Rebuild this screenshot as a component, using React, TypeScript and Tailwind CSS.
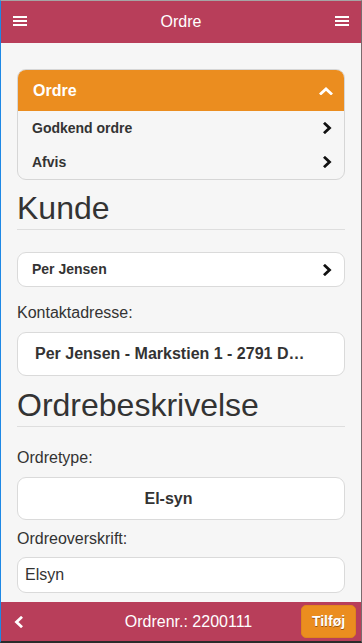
import React from 'react'

const ChevronRight = ({ color = '#111' }: { color?: string }) => (
  <svg width="9" height="12" viewBox="0 0 9 12">
    <polyline points="2,1.8 6.5,6 2,10.2" fill="none" stroke={color} strokeWidth="2.8" strokeLinecap="square" />
  </svg>
)

const ChevronLeft = () => (
  <svg width="9" height="12" viewBox="0 0 9 12">
    <polyline points="7,1.8 2.5,6 7,10.2" fill="none" stroke="#fff" strokeWidth="2.8" strokeLinecap="square" />
  </svg>
)

const ChevronUp = () => (
  <svg width="14" height="8" viewBox="0 0 14 8">
    <polyline points="2,6.5 7,2 12,6.5" fill="none" stroke="#fff" strokeWidth="2.8" strokeLinecap="square" />
  </svg>
)

const Burger = () => (
  <div className="flex flex-col gap-[2px] w-[14px]">
    <span className="block h-[2px] bg-white" />
    <span className="block h-[2px] bg-white" />
    <span className="block h-[2px] bg-white" />
  </div>
)

export default function App() {
  return (
    <div className="w-[362px] h-[643px] flex flex-col overflow-hidden border-t border-t-[#a5a5a5] border-l border-l-[#1e88e5] border-r border-r-[#7a6a6e] border-b-2 border-b-[#2b2b2b] font-['Liberation_Sans',Arial,sans-serif] text-[#333]">
      {/* header */}
      <div className="h-[42px] shrink-0 bg-[#b83e5a] flex items-start justify-between px-[12px] pt-[15px]">
        <Burger />
        <span className="text-white text-[16px] leading-[14px] mt-[-1px]">Ordre</span>
        <Burger />
      </div>

      {/* content */}
      <div className="flex-1 bg-[#f6f6f6] px-4 pt-[26px] overflow-hidden">
        <div className="rounded-[9px] border border-[#d6d6d6] overflow-hidden">
          <div className="h-[41px] bg-[#eb8d1f] flex items-center justify-between pl-[15px] pr-[11px]">
            <span className="text-white font-bold text-[16px]">Ordre</span>
            <ChevronUp />
          </div>
          <div className="h-[34px] flex items-center justify-between pl-[14px] pr-[12px]">
            <span className="font-bold text-[14px]">Godkend ordre</span>
            <ChevronRight />
          </div>
          <div className="h-[34px] flex items-center justify-between pl-[14px] pr-[12px]">
            <span className="font-bold text-[14px]">Afvis</span>
            <ChevronRight />
          </div>
        </div>

        <h2 className="mt-[9px] text-[32px] leading-[38px] pb-[2px] border-b border-[#dedede]">Kunde</h2>

        <div className="mt-[22px] h-[35px] bg-white rounded-[9px] border border-[#dadada] flex items-center justify-between pl-[14px] pr-[12px]">
          <span className="font-bold text-[14px]">Per Jensen</span>
          <ChevronRight />
        </div>

        <div className="mt-[16px] text-[16px] leading-5">Kontaktadresse:</div>
        <div className="mt-[9px] h-[44px] bg-white rounded-[9px] border border-[#dadada] flex items-center pl-[17px] pr-[20px]">
          <span className="font-bold text-[16px] whitespace-nowrap">Per Jensen - Markstien 1 - 2791 D…</span>
        </div>

        <h2 className="mt-[10px] text-[32px] leading-[38px] pb-[2px] border-b border-[#dedede]">Ordrebeskrivelse</h2>

        <div className="mt-[21px] text-[16px] leading-5">Ordretype:</div>
        <div className="mt-[9px] h-[43px] bg-white rounded-[9px] border border-[#dadada] flex items-center justify-center pl-[15px] pr-[40px]">
          <span className="font-bold text-[16px]">El-syn</span>
        </div>

        <div className="mt-[9px] text-[16px] leading-5">Ordreoverskrift:</div>
        <div className="mt-[8px] h-[36px] bg-white rounded-[9px] border border-[#dadada] flex items-center pl-[7px]">
          <span className="text-[16px]">Elsyn</span>
        </div>
      </div>

      {/* footer */}
      <div className="h-[39px] shrink-0 bg-[#b83e5a] flex items-center">
        <div className="w-[75px] pl-[13px] flex items-center">
          <ChevronLeft />
        </div>
        <div className="flex-1 text-center text-white text-[16px]">Ordrenr.: 2200111</div>
        <div className="mr-[5px] w-[55px] h-[33px] rounded-[5px] bg-[#eb8d1f] border border-[#e0851c] flex items-center justify-center text-white font-bold text-[14px] [text-shadow:0_1px_0_#9a5512]">
          Tilføj
        </div>
      </div>
    </div>
  )
}
